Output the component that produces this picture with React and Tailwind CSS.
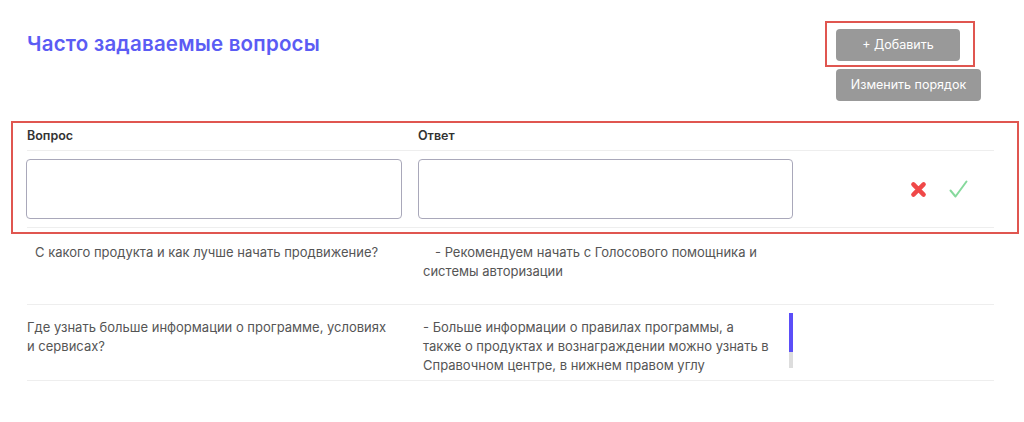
import { useState } from "react";

const rows = [
  {
    q: ["С какого продукта и как лучше начать продвижение?"],
    a: ["- Рекомендуем начать с Голосового помощника и", "системы авторизации"],
    qIndent: "indent-2",
    aIndent: "indent-3",
    cls: "h-[71px] pt-[9px]",
  },
  {
    q: ["Где узнать больше информации о программе, условиях", "и сервисах?"],
    a: [
      "- Больше информации о правилах программы, а",
      "также о продуктах и вознаграждении можно узнать в",
      "Справочном центре, в нижнем правом углу",
    ],
    qIndent: "",
    aIndent: "",
    cls: "h-[76px] pt-[13px]",
    scroll: true,
  },
];

function CrossIcon() {
  return (
    <svg width="17" height="17" viewBox="0 0 16 16">
      <path d="M3.2 3.2 L12.8 12.8 M12.8 3.2 L3.2 12.8" stroke="#f04848" strokeWidth="4.2" strokeLinecap="round" />
    </svg>
  );
}

function CheckIcon() {
  return (
    <svg width="19" height="18" viewBox="0 0 19 18">
      <path d="M1.5 10.5 L6.5 16.5 L17.5 1.5" fill="none" stroke="#86d99c" strokeWidth="2" strokeLinecap="round" strokeLinejoin="round" />
    </svg>
  );
}

export default function App() {
  const [question, setQuestion] = useState("");
  const [answer, setAnswer] = useState("");

  return (
    <div className="w-[1024px] h-[422px] bg-white overflow-hidden font-['Inter',sans-serif]">
      {/* Header */}
      <div className="flex pt-[21px]">
        <div className="flex-1 pl-[27px] pt-[9px]">
          <h1 className="text-[20.5px] leading-[28px] font-semibold text-[#5b5cf4] tracking-[0.2px]">
            Часто задаваемые вопросы
          </h1>
        </div>
        <div className="w-[199px] flex flex-col items-start">
          <div className="w-[150px] h-[46px] border-2 border-[#e05650] pl-[9px] pt-[6px]">
            <button className="w-[124px] h-[32px] rounded-[4px] bg-[#999999] text-white text-[12.5px]">
              + Добавить
            </button>
          </div>
          <button className="ml-[11px] mt-[2px] w-[145px] h-[32px] rounded-[4px] bg-[#999999] text-white text-[12.5px]">
            Изменить порядок
          </button>
        </div>
      </div>

      {/* Editable table */}
      <div className="ml-[11px] mt-[20px] w-[1008px] border-2 border-[#e05650] pl-[14px] pr-[23px] pb-[4px]">
        <div className="grid grid-cols-[391px_375px_1fr] h-[28px] items-center border-b border-[#eeeeee] text-[12.5px] font-semibold text-[#333333]">
          <div>Вопрос</div>
          <div>Ответ</div>
          <div />
        </div>
        <div className="grid grid-cols-[391px_375px_1fr] py-[8px] border-b border-[#eeeeee]">
          <textarea
            value={question}
            onChange={(e) => setQuestion(e.target.value)}
            className="-ml-px w-[376px] h-[60px] border border-[#a9a8ba] rounded-[4px] resize-none outline-none px-2 py-1 text-[13px]"
          />
          <textarea
            value={answer}
            onChange={(e) => setAnswer(e.target.value)}
            className="w-[375px] h-[60px] border border-[#a9a8ba] rounded-[4px] resize-none outline-none px-2 py-1 text-[13px]"
          />
          <div className="flex justify-end items-center gap-[22px] pr-[26px]">
            <CrossIcon />
            <CheckIcon />
          </div>
        </div>
      </div>

      {/* Rows */}
      <div className="ml-[27px] w-[967px]">
        {rows.map((r, i) => (
          <div key={i} className={`grid grid-cols-[391px_375px_1fr] border-b border-[#eeeeee] text-[13px] leading-[19px] text-[#555555] ${r.cls}`}>
            <div className="pr-[10px]">
              {r.q.map((line, j) => (
                <div key={j} className={`whitespace-nowrap ${j === 0 ? r.qIndent : ""}`}>{line}</div>
              ))}
            </div>
            <div className="relative pl-[5px] pr-[14px]">
              {r.a.map((line, j) => (
                <div key={j} className={`whitespace-nowrap ${j === 0 ? r.aIndent : ""}`}>{line}</div>
              ))}
              {r.scroll && (
                <div className="absolute right-0 top-[-5px] w-[4px] h-[55px] bg-[#dddddd]">
                  <div className="w-[4px] h-[39px] bg-[#5b4ef8]" />
                </div>
              )}
            </div>
            <div />
          </div>
        ))}
      </div>
    </div>
  );
}
